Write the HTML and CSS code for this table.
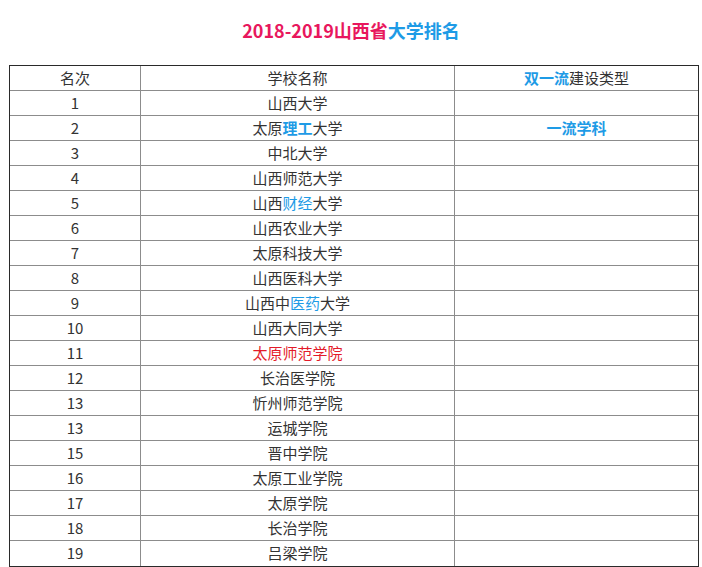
FILE: index.html
```html
<!DOCTYPE html>
<html lang="zh-CN">
<head>
<meta charset="utf-8">
<title>2018-2019山西省大学排名</title>
<link rel="stylesheet" href="styles.css">
</head>
<body>
<h1 class="title"><span class="pink">2018-2019山西省</span><span class="blue">大学排名</span></h1>
<div class="table">
  <div class="row head">
    <div class="cell">名次</div>
    <div class="cell">学校名称</div>
    <div class="cell"><b class="blue">双一流</b>建设类型</div>
  </div>
  <div class="row"><div class="cell">1</div><div class="cell">山西大学</div><div class="cell"></div></div>
  <div class="row"><div class="cell">2</div><div class="cell">太原<b class="blue">理工</b>大学</div><div class="cell"><b class="blue">一流学科</b></div></div>
  <div class="row"><div class="cell">3</div><div class="cell">中北大学</div><div class="cell"></div></div>
  <div class="row"><div class="cell">4</div><div class="cell">山西师范大学</div><div class="cell"></div></div>
  <div class="row"><div class="cell">5</div><div class="cell">山西<span class="blue">财经</span>大学</div><div class="cell"></div></div>
  <div class="row"><div class="cell">6</div><div class="cell">山西农业大学</div><div class="cell"></div></div>
  <div class="row"><div class="cell">7</div><div class="cell">太原科技大学</div><div class="cell"></div></div>
  <div class="row"><div class="cell">8</div><div class="cell">山西医科大学</div><div class="cell"></div></div>
  <div class="row"><div class="cell">9</div><div class="cell">山西中<span class="blue">医药</span>大学</div><div class="cell"></div></div>
  <div class="row"><div class="cell">10</div><div class="cell">山西大同大学</div><div class="cell"></div></div>
  <div class="row"><div class="cell">11</div><div class="cell"><span class="red">太原师范学院</span></div><div class="cell"></div></div>
  <div class="row"><div class="cell">12</div><div class="cell">长治医学院</div><div class="cell"></div></div>
  <div class="row"><div class="cell">13</div><div class="cell">忻州师范学院</div><div class="cell"></div></div>
  <div class="row"><div class="cell">13</div><div class="cell">运城学院</div><div class="cell"></div></div>
  <div class="row"><div class="cell">15</div><div class="cell">晋中学院</div><div class="cell"></div></div>
  <div class="row"><div class="cell">16</div><div class="cell">太原工业学院</div><div class="cell"></div></div>
  <div class="row"><div class="cell">17</div><div class="cell">太原学院</div><div class="cell"></div></div>
  <div class="row"><div class="cell">18</div><div class="cell">长治学院</div><div class="cell"></div></div>
  <div class="row"><div class="cell">19</div><div class="cell">吕梁学院</div><div class="cell"></div></div>
</div>
</body>
</html>
```

FILE: styles.css
```css
* { box-sizing: border-box; }
html, body {
  margin: 0;
  padding: 0;
  background: #fff;
}
body {
  font-family: "Noto Sans CJK SC", "Noto Sans", "Liberation Sans", sans-serif;
  color: #333;
  width: 702px;
  overflow: hidden;
}
.title {
  margin: 0 0 23px 0;
  padding-top: 18px;
  text-align: center;
  font-size: 18px;
  line-height: 24px;
  font-weight: bold;
}
.pink { color: #e8175d; }
.blue { color: #1e9be6; }
.red { color: #e31b2a; }
b { font-weight: bold; }
.table {
  margin-left: 9px;
  width: 690px;
  border: 1px solid #2a2a2a;
}
.row {
  display: grid;
  grid-template-columns: 131px 314px 1fr;
  height: 25px;
  border-bottom: 1px solid #8c8c8c;
}
.row:last-child { border-bottom: none; }
.cell {
  text-align: center;
  font-size: 15px;
  line-height: 24px;
  white-space: nowrap;
}
.cell:not(:last-child) { border-right: 1px solid #8c8c8c; }
```
